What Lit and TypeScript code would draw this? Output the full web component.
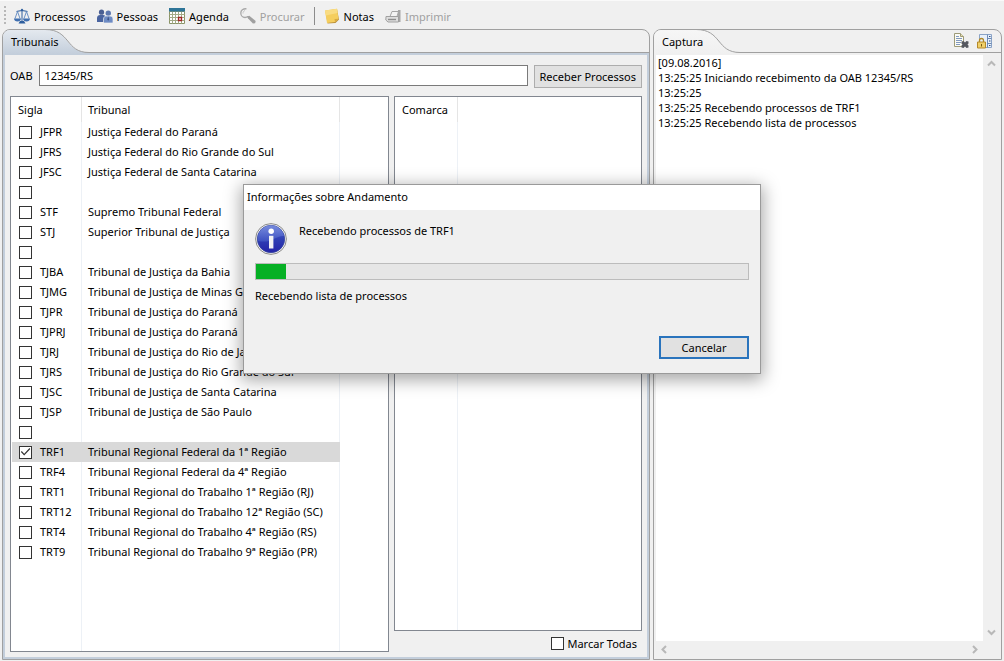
import { LitElement, html, css, svg, nothing } from "lit";
import { customElement, property, state } from "lit/decorators.js";
import { classMap } from "lit/directives/class-map.js";

type Court = { sigla: string; name: string; checked?: boolean };

const COURTS: Court[] = [
  { sigla: "JFPR", name: "Justiça Federal do Paraná" },
  { sigla: "JFRS", name: "Justiça Federal do Rio Grande do Sul" },
  { sigla: "JFSC", name: "Justiça Federal de Santa Catarina" },
  { sigla: "", name: "" },
  { sigla: "STF", name: "Supremo Tribunal Federal" },
  { sigla: "STJ", name: "Superior Tribunal de Justiça" },
  { sigla: "", name: "" },
  { sigla: "TJBA", name: "Tribunal de Justiça da Bahia" },
  { sigla: "TJMG", name: "Tribunal de Justiça de Minas Gerais" },
  { sigla: "TJPR", name: "Tribunal de Justiça do Paraná" },
  { sigla: "TJPRJ", name: "Tribunal de Justiça do Paraná" },
  { sigla: "TJRJ", name: "Tribunal de Justiça do Rio de Janeiro" },
  { sigla: "TJRS", name: "Tribunal de Justiça do Rio Grande do Sul" },
  { sigla: "TJSC", name: "Tribunal de Justiça de Santa Catarina" },
  { sigla: "TJSP", name: "Tribunal de Justiça de São Paulo" },
  { sigla: "", name: "" },
  { sigla: "TRF1", name: "Tribunal Regional Federal da 1ª Região", checked: true },
  { sigla: "TRF4", name: "Tribunal Regional Federal da 4ª Região" },
  { sigla: "TRT1", name: "Tribunal Regional do Trabalho 1ª Região (RJ)" },
  { sigla: "TRT12", name: "Tribunal Regional do Trabalho 12ª Região (SC)" },
  { sigla: "TRT4", name: "Tribunal Regional do Trabalho 4ª Região (RS)" },
  { sigla: "TRT9", name: "Tribunal Regional do Trabalho 9ª Região (PR)" },
];

const LOG = [
  "[09.08.2016]",
  "13:25:25 Iniciando recebimento da OAB 12345/RS",
  "13:25:25",
  "13:25:25 Recebendo processos de TRF1",
  "13:25:25 Recebendo lista de processos",
];

const ICONS: Record<string, unknown> = {
  scales: svg`
    <path d="M7.5 1h1v12h-1z" fill="#2f5f9e"/>
    <path d="M8 0.5l1.3 1.5L8 3.5 6.700 2z" fill="#2f5f9e"/>
    <path d="M2.500 3.500C4.500 3.500 5.500 2.500 8 2.500S11.500 3.500 13.500 3.500" fill="none" stroke="#2f5f9e" stroke-width="1.200"/>
    <path d="M3.500 3.500L1 10.500M3.500 3.500L6 10.500M12.500 3.500L10 10.500M12.500 3.500L15 10.500" stroke="#5b86bf" fill="none" stroke-width=".9"/>
    <path d="M0 10.500h7c0 2-1.500 3-3.500 3S0 12.500 0 10.500zM9 10.500h7c0 2-1.500 3-3.500 3S9 12.500 9 10.500z" fill="#3f6fb0"/>
    <path d="M6 13h4l1.500 2.500h-7z" fill="#2f5f9e"/>`,
  people: svg`
    <circle cx="4.500" cy="4.200" r="2.600" fill="#4a5f93"/>
    <path d="M0 14V10c0-2 1.500-3 3-3h3c1.500 0 3 1 3 3v4z" fill="#4a64a0"/>
    <circle cx="11.300" cy="5.200" r="2.700" fill="#5f79b0"/>
    <path d="M6.500 15v-4c0-1.800 1.300-3 3-3h3.500c1.700 0 3 1.200 3 3v4z" fill="#6d8bc4" stroke="#f0f0f0" stroke-width=".7"/>
    <path d="M11.200 8.300l1 3.200-1 1.300-1-1.300z" fill="#3e5588"/>`,
  calendar: svg`
    <path d="M.5 3.500h15v12H.5z" fill="#fff" stroke="#8b9468"/>
    <path d="M3.500 3.500v12M6.500 3.500v12M9.500 3.500v12M12.500 3.500v12M.5 6.500h15M.5 9.500h15M.5 12.500h15" stroke="#a3aa86"/>
    <path d="M0 0h16v3.500H0z" fill="#2e7598"/>
    <path d="M9.500 9.500h3v3h-3z" fill="#fff" stroke="#a32626" stroke-width="1.300"/>`,
  search: svg`
    <path d="M6.500 .8C3 .5 .8 2.500 .8 5s1.700 4.500 4.200 4.500c1.200 0 2.200-.3 3-.9" fill="none" stroke="#a8a8a8" stroke-width="1.300"/>
    <path d="M5 2.500C3.500 3 3 4 3 5.500" fill="none" stroke="#c4c4c4"/>
    <path d="M7 8.500l2.300-.8 6.400 5.300-.6 2.300-2.200.2-5-5.300z" fill="#a0a0a0"/>`,
  note: svg`
    <path d="M1.500 3L13 1l2 10.500-3.500 3.500L3.500 15.500z" fill="#b9903c"/>
    <path d="M1 2.500L13 .8l1.500 10L11 14 3 15z" fill="#f5ce5e"/>
    <path d="M1 2.500L13 .8l.6 4.200L1.700 7.500z" fill="#f9dc83"/>
    <path d="M14.500 10.800L11 14l-.5-3z" fill="#d8a93f"/>`,
  printer: svg`
    <path d="M5 8.500L7 3.500h6.500L12 8.500z" fill="#f4f4f4" stroke="#a6a6a6"/>
    <path d="M13 2h2.500v12H13z" fill="#a6a6a6"/>
    <path d="M1 8.500h12.500v5.500H3L.8 12z" fill="#dedede" stroke="#a0a0a0"/>
    <path d="M3 11.500h8" stroke="#8e8e8e" stroke-width="1.400"/>`,
  clear: svg`
    <path d="M1.500 .5h6l3 3v10h-9z" fill="#fbfbf4" stroke="#9d9a78"/>
    <path d="M7.500 .5v3h3" fill="#e8dfb0" stroke="#9d9a78"/>
    <path d="M3 3.500h3M3 5.500h6M3 7.500h6M3 9.500h5M3 11.500h4" stroke="#8199bf"/>
    <path d="M8.500 8.500l2-.5 1.500 1.500 1.500-1.500 2 .5v2l-1 1 1 1v2l-2 .5-1.500-1.500-1.500 1.500-2-.5v-2l1-1-1-1z" fill="#55585f"/>`,
  lock: svg`
    <path d="M2.500 1.500h12v13h-12z" fill="#e8f0f9" stroke="#8aa3c6"/>
    <path d="M10.500 1.500v13M10.500 5.500h4M10.500 10.500h4" stroke="#6d8ab5"/>
    <path d="M12 3.500h1.500M12 12.500h1.500M12 8h1.500" stroke="#2f4f82"/>
    <path d="M2.500 9V7.500a2 2 0 0 1 4 0V9" fill="none" stroke="#b08a2a" stroke-width="1.300"/>
    <path d="M.5 9h8v6h-8z" fill="#f0d06a" stroke="#b5892a"/>
    <path d="M4 11h1v2.500H4z" fill="#7a5a14"/>`,
};

const icon = (name: string) =>
  html`<svg class="icon" viewBox="0 0 16 16" width="16" height="16" aria-hidden="true">${ICONS[name]}</svg>`;

const base = css`
  * {
    box-sizing: border-box;
  }
  button,
  input {
    font: inherit;
    color: inherit;
  }
  .plain {
    border: 0;
    background: none;
    padding: 0;
    display: flex;
    align-items: center;
  }
  .icon {
    display: block;
    flex: none;
  }
  .check {
    appearance: none;
    flex: none;
    width: 13px;
    height: 13px;
    margin: 0;
    border: 1px solid #333;
    background: #fff;
    display: grid;
  }
  .check:checked::before {
    content: "";
    background: #333;
    clip-path: polygon(8% 50%, 16% 42%, 38% 66%, 86% 14%, 94% 22%, 38% 82%);
  }
`;

@customElement("tab-folder")
export class TabFolder extends LitElement {
  static styles = [
    base,
    css`
      :host {
        display: flex;
        flex-direction: column;
        min-width: 0;
        border: 1px solid #a0a0a0;
        border-radius: 8px 8px 0 0;
        overflow: hidden;
      }
      .head {
        flex: none;
        display: flex;
        align-items: center;
        justify-content: space-between;
        height: 23px;
        border-bottom: 1px solid #a0a0a0;
        padding-right: 8px;
      }
      .tab {
        position: relative;
        z-index: 0;
        height: 23px;
        padding: 0 32px 0 8px;
      }
      .shape {
        position: absolute;
        inset: 0 auto auto 0;
        z-index: -1;
      }
      .body {
        flex: 1;
        min-height: 0;
        display: flex;
        border: 1px solid #f0f0f0;
        border-width: 2px 1px 1px 2px;
      }
      .active .body {
        border: 2px solid #c3cedb;
      }
      .root {
        flex: 1;
        min-height: 0;
        display: flex;
        flex-direction: column;
      }
    `,
  ];

  @property() label = "";
  @property({ type: Boolean }) active = false;

  render() {
    const top = this.active ? "#e4e9ef" : "#f6f6f6";
    const bottom = this.active ? "#c3cedb" : "#f0f0f0";
    return html`
      <div class=${classMap({ root: true, active: this.active })}>
        <div class="head">
          <button class="plain tab" role="tab">
            <svg class="shape" width="90" height="24" viewBox="0 0 90 24" aria-hidden="true">
              <defs>
                <linearGradient id="fill" x1="0" y1="0" x2="0" y2="1">
                  <stop offset="0" stop-color=${top} />
                  <stop offset="1" stop-color=${bottom} />
                </linearGradient>
              </defs>
              <path d="M0 0H46C66 0 62 22.500 86 22.500V24H0z" fill="url(#fill)" />
              <path d="M42 -.5C68 -.5 62 22.500 86 22.500" fill="none" stroke="#a0a0a0" />
            </svg>
            ${this.label}
          </button>
          <slot name="actions"></slot>
        </div>
        <div class="body"><slot></slot></div>
      </div>
    `;
  }
}

@customElement("progress-dialog")
export class ProgressDialog extends LitElement {
  static styles = [
    base,
    css`
      :host {
        display: block;
        width: 518px;
        border: 1px solid #9a9a9a;
        background: #f0f0f0;
        box-shadow: 0 4px 16px 2px rgba(0, 0, 0, 0.35);
      }
      .title {
        height: 25px;
        padding: 0 3px;
        background: #fff;
        font: inherit;
        line-height: 24px;
        margin: 0;
      }
      .content {
        display: flex;
        flex-direction: column;
        padding: 13px 11px 14px;
      }
      .message {
        display: flex;
        gap: 12px;
        margin-bottom: 8px;
      }
      .message p {
        margin: 0;
        line-height: 16px;
      }
      .bar {
        height: 17px;
        border: 1px solid #bcbcbc;
        background: #e6e6e6;
        display: flex;
      }
      .fill {
        background: #06b025;
      }
      .detail {
        margin: 8px 0 32px;
        line-height: 16px;
      }
      .cancel {
        align-self: flex-end;
        width: 90px;
        height: 23px;
        padding: 0;
        border: 2px solid #2a74bd;
        background: #e1e1e1;
      }
    `,
  ];

  @property({ type: Number }) value = 0;

  render() {
    return html`
      <section role="dialog" aria-labelledby="title">
        <h2 class="title" id="title">Informações sobre Andamento</h2>
        <div class="content">
          <div class="message">
            <svg class="icon" width="32" height="32" viewBox="0 0 32 32" aria-hidden="true">
              <defs>
                <linearGradient id="ball" x1="0" y1="0" x2="0" y2="1">
                  <stop offset="0" stop-color="#5a6fd2" />
                  <stop offset=".5" stop-color="#2f3fb4" />
                  <stop offset="1" stop-color="#2423a8" />
                </linearGradient>
                <linearGradient id="gloss" x1="0" y1="0" x2="0" y2="1">
                  <stop offset="0" stop-color="#8296e2" />
                  <stop offset="1" stop-color="#4257c6" />
                </linearGradient>
              </defs>
              <circle cx="16" cy="16" r="15.400" fill="#f4f4f4" stroke="#8b8b8b" />
              <circle cx="16" cy="16" r="13.700" fill="url(#ball)" stroke="#33449a" stroke-width=".8" />
              <path d="M3 18A13.200 13.200 0 0 1 29 13C21 12 17 21 3 18z" fill="url(#gloss)" opacity=".75" />
              <circle cx="16.200" cy="8.300" r="2.700" fill="#fff" />
              <path d="M14 12.800h4.400v12.700H14z" fill="#f2f2f4" />
            </svg>
            <p>Recebendo processos de TRF1</p>
          </div>
          <div
            class="bar"
            role="progressbar"
            aria-label="Andamento"
            aria-valuemin="0"
            aria-valuemax="100"
            aria-valuenow=${this.value}
          >
            <div class="fill" style="width:${this.value}%"></div>
          </div>
          <p class="detail">Recebendo lista de processos</p>
          <button class="cancel">Cancelar</button>
        </div>
      </section>
    `;
  }
}

@customElement("app-root")
export class AppRoot extends LitElement {
  static styles = [
    base,
    css`
      :host {
        display: flex;
        flex-direction: column;
        position: relative;
        height: 100vh;
        background: #f0f0f0;
        color: #000;
        font: 11px/15px "Noto Sans", "Open Sans", sans-serif;
        overflow: hidden;
      }
      .toolbar {
        flex: none;
        display: flex;
        align-items: center;
        gap: 1px;
        height: 29px;
        padding: 2px 4px 0;
        border-top: 1px solid #fafafa;
      }
      .grip {
        width: 2px;
        height: 20px;
        margin-right: 2px;
        background: repeating-linear-gradient(#b8b8b8 0 2px, transparent 2px 4px);
      }
      .tool {
        gap: 4px;
        padding: 0 5px;
      }
      .tool:disabled {
        color: #a0a0a0;
      }
      .line {
        width: 1px;
        height: 18px;
        margin: 0 3px;
        background: #8c8c8c;
      }
      .panes {
        flex: 1;
        min-height: 0;
        display: grid;
        grid-template-columns: 648fr 349fr;
        gap: 3px;
        padding: 0 2px 1px;
      }
      .form {
        flex: 1;
        min-width: 0;
        display: flex;
        flex-direction: column;
        gap: 8px;
        padding: 10px 5px 5px;
      }
      .query {
        display: flex;
        align-items: flex-start;
        gap: 6px;
      }
      .query label {
        line-height: 21px;
      }
      .oab {
        flex: 1;
        min-width: 0;
        height: 21px;
        padding: 0 5px;
        border: 1px solid #7a7a7a;
        border-radius: 0;
        background: #fff;
      }
      .fetch {
        height: 23px;
        padding: 0 5px;
        border: 1px solid #adadad;
        background: #e1e1e1;
      }
      .lists {
        flex: 1;
        min-height: 0;
        display: grid;
        grid-template-columns: 379fr 248fr;
        gap: 5px;
      }
      .side {
        min-width: 0;
        min-height: 0;
        display: flex;
        flex-direction: column;
      }
      .all {
        display: flex;
        align-items: center;
        justify-content: flex-end;
        gap: 3px;
        height: 21px;
        padding: 4px 5px 0 0;
      }
      .frame {
        flex: 1;
        min-width: 0;
        min-height: 0;
        border: 1px solid #828790;
        background: #fff;
        padding: 0 1px;
        overflow: hidden;
      }
      table {
        width: 100%;
        height: 100%;
        table-layout: fixed;
        border-collapse: separate;
        border-spacing: 0;
      }
      th,
      td {
        padding: 0 6px;
        text-align: left;
        font-weight: 400;
        white-space: nowrap;
        overflow: hidden;
        border-right: 1px solid #edf1f6;
      }
      th:last-child,
      td:last-child {
        border-right: 0;
      }
      th {
        height: 25px;
        border-color: #e5e5e5;
      }
      .row td {
        height: 20px;
        padding-bottom: 1px;
      }
      .selected td:not(:last-child) {
        background: #d9d9d9;
        border-color: #d9d9d9;
      }
      .c-sigla {
        width: 70px;
      }
      .c-name {
        width: 258px;
      }
      .c-comarca {
        width: 62px;
      }
      .pick {
        display: flex;
        align-items: center;
        gap: 8px;
        padding-left: 1px;
      }
      .pick .check {
        margin-top: 1px;
      }
      .actions {
        display: flex;
        gap: 8px;
      }
      .console {
        flex: 1;
        min-width: 0;
        display: grid;
        grid-template: minmax(0, 1fr) 17px / minmax(0, 1fr) 17px;
      }
      .log {
        background: #fff;
        padding: 0 2px;
        overflow: hidden;
      }
      .vbar,
      .hbar {
        display: flex;
        justify-content: space-between;
      }
      .vbar {
        flex-direction: column;
      }
      .step {
        width: 17px;
        height: 17px;
        justify-content: center;
      }
      .step path {
        fill: none;
        stroke: #b8b8b8;
        stroke-width: 2;
      }
      .overlay {
        position: absolute;
        inset: 0;
        display: flex;
        justify-content: center;
        align-items: flex-start;
        padding-top: 184px;
      }
    `,
  ];

  @state() private courts = COURTS;

  private toggle(i: number) {
    this.courts = this.courts.map((c, n) => (n === i ? { ...c, checked: !c.checked } : c));
  }

  private tool(name: string, label: string, disabled = false) {
    return html`<button class="plain tool" ?disabled=${disabled}>${icon(name)}${label}</button>`;
  }

  private step(label: string, d: string) {
    return html`<button class="plain step" aria-label=${label}>
      <svg width="9" height="9" viewBox="0 0 9 9" aria-hidden="true"><path d=${d} /></svg>
    </button>`;
  }

  render() {
    return html`
      <nav class="toolbar">
        <span class="grip"></span>
        ${this.tool("scales", "Processos")} ${this.tool("people", "Pessoas")}
        ${this.tool("calendar", "Agenda")} ${this.tool("search", "Procurar", true)}
        <span class="line"></span>
        ${this.tool("note", "Notas")} ${this.tool("printer", "Imprimir", true)}
      </nav>
      <main class="panes">
        <tab-folder label="Tribunais" active>
          <div class="form">
            <div class="query">
              <label for="oab">OAB</label>
              <input class="oab" id="oab" type="text" value="12345/RS" />
              <button class="fetch">Receber Processos</button>
            </div>
            <div class="lists">
              <div class="frame">
                <table>
                  <colgroup>
                    <col class="c-sigla" />
                    <col class="c-name" />
                    <col />
                  </colgroup>
                  <thead>
                    <tr><th>Sigla</th><th>Tribunal</th><th></th></tr>
                  </thead>
                  <tbody>
                    ${this.courts.map(
                      (c, i) => html`<tr class=${classMap({ row: true, selected: !!c.checked })}>
                        <td>
                          <label class="pick">
                            <input
                              class="check"
                              type="checkbox"
                              aria-label=${c.sigla ? nothing : "Sem sigla"}
                              .checked=${!!c.checked}
                              @change=${() => this.toggle(i)}
                            />${c.sigla}
                          </label>
                        </td>
                        <td>${c.name}</td>
                        <td></td>
                      </tr>`
                    )}
                    <tr><td></td><td></td><td></td></tr>
                  </tbody>
                </table>
              </div>
              <div class="side">
                <div class="frame">
                  <table>
                    <colgroup>
                      <col class="c-comarca" />
                      <col />
                    </colgroup>
                    <thead>
                      <tr><th>Comarca</th><th></th></tr>
                    </thead>
                    <tbody>
                      <tr><td></td><td></td></tr>
                    </tbody>
                  </table>
                </div>
                <label class="all"><input class="check" type="checkbox" />Marcar Todas</label>
              </div>
            </div>
          </div>
        </tab-folder>
        <tab-folder label="Captura">
          <div class="actions" slot="actions">
            <button class="plain" aria-label="Limpar">${icon("clear")}</button>
            <button class="plain" aria-label="Bloquear rolagem">${icon("lock")}</button>
          </div>
          <div class="console">
            <div class="log" role="log">${LOG.map((l) => html`<div>${l}</div>`)}</div>
            <div class="vbar">
              ${this.step("Rolar para cima", "M1 6.500L4.500 3L8 6.500")}
              ${this.step("Rolar para baixo", "M1 2.500L4.500 6L8 2.500")}
            </div>
            <div class="hbar">
              ${this.step("Rolar para a esquerda", "M6 1L2.500 4.500L6 8")}
              ${this.step("Rolar para a direita", "M3 1L6.500 4.500L3 8")}
            </div>
          </div>
        </tab-folder>
      </main>
      <div class="overlay"><progress-dialog .value=${6}></progress-dialog></div>
    `;
  }
}
